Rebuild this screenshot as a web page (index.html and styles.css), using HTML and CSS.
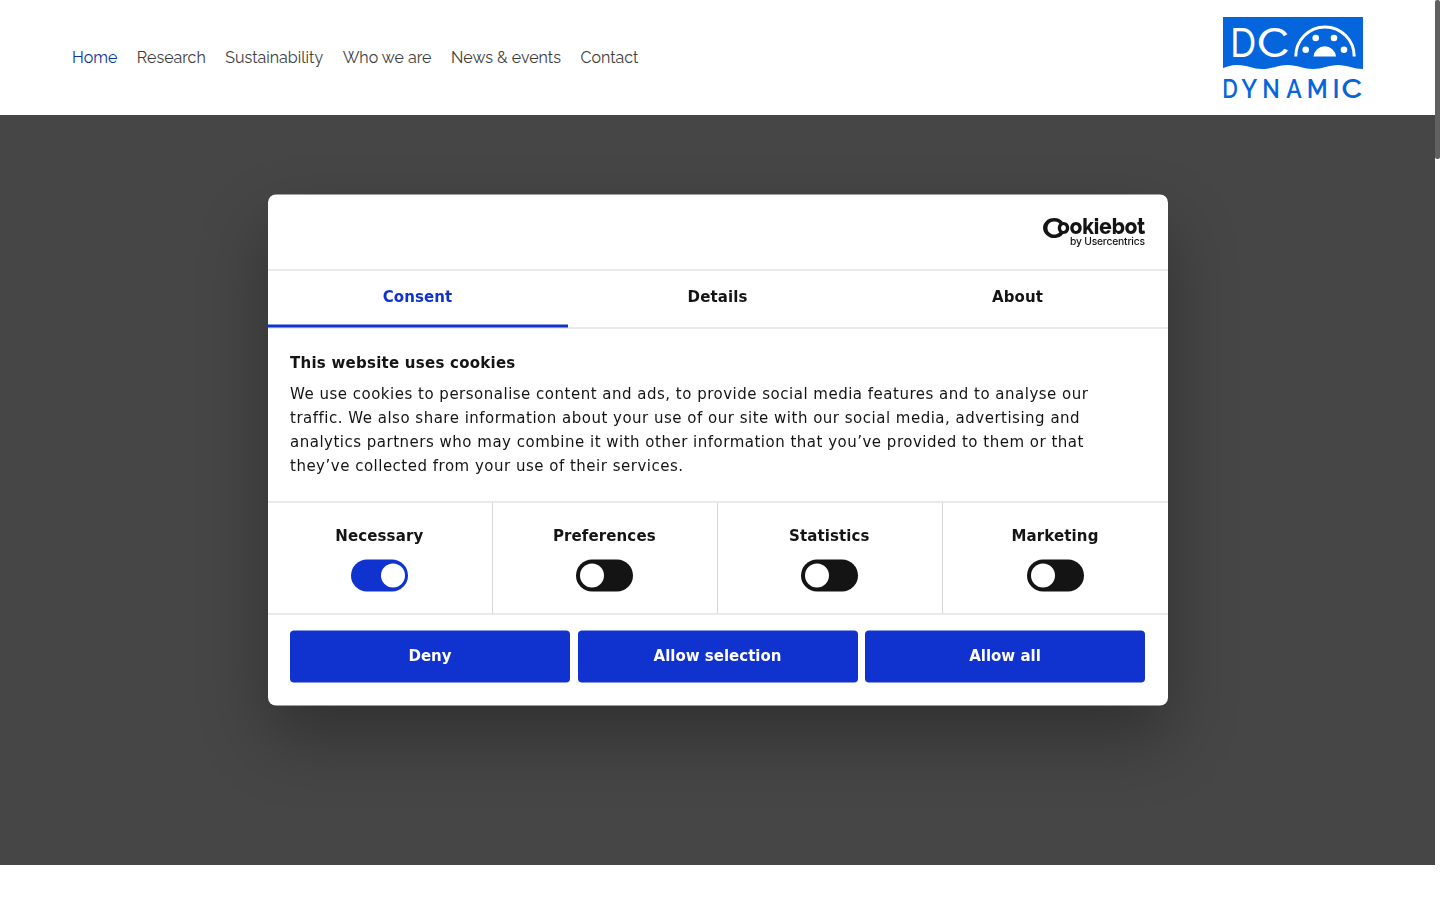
FILE: index.html
```html
<!DOCTYPE html>
<html lang="en">
<head>
    <meta charset="UTF-8">
    <meta name="viewport" content="width=device-width, initial-scale=1.0">
    <title>DC Dynamic</title>
    <link rel="stylesheet" href="styles.css">
</head>
<body>
    <header class="site-header">
        <nav class="main-nav">
            <a class="active" href="#">Home</a>
            <a href="#">Research</a>
            <a href="#">Sustainability</a>
            <a href="#">Who we are</a>
            <a href="#">News &amp; events</a>
            <a href="#">Contact</a>
        </nav>
        <a class="logo" href="#">
            <svg width="140" height="82" viewBox="0 0 140 82">
                <path fill="#0565dc" d="M0 0H140V52C131 52 124 48 115 48S99 52 90 52S74 48 65 48S48 52 39 52S24 48 15 48S5 50 0 51Z"/>
                <text class="logo-dc" y="39.7"><tspan x="7.2" textLength="25.5" lengthAdjust="spacingAndGlyphs">D</tspan><tspan x="34" textLength="32" lengthAdjust="spacingAndGlyphs">C</tspan></text>
                <path fill="none" stroke="#fff" stroke-width="3" d="M72.8 39.5A29.2 29.6 0 0 1 131.2 39.5"/>
                <path fill="#fff" d="M90.5 39.5A11.3 11.3 0 0 1 113 39.5Z"/>
                <g fill="#fff">
                    <circle cx="92.7" cy="21" r="3.3"/>
                    <circle cx="111" cy="21" r="3.3"/>
                    <circle cx="82.7" cy="32.8" r="3.3"/>
                    <circle cx="121" cy="32.8" r="3.3"/>
                </g>
                <text class="logo-name" y="80.7">
                    <tspan x="-0.8" textLength="15.5" lengthAdjust="spacingAndGlyphs">D</tspan><tspan x="18.3" textLength="16" lengthAdjust="spacingAndGlyphs">Y</tspan><tspan x="39.3" textLength="17.5" lengthAdjust="spacingAndGlyphs">N</tspan><tspan x="63.3" textLength="15.5" lengthAdjust="spacingAndGlyphs">A</tspan><tspan x="83.8" textLength="21" lengthAdjust="spacingAndGlyphs">M</tspan><tspan x="109.5">I</tspan><tspan x="118.5" textLength="20.5" lengthAdjust="spacingAndGlyphs">C</tspan>
                </text>
            </svg>
        </a>
    </header>

    <main class="hero"></main>

    <div class="cookie-dialog">
        <div class="cookie-header">
            <svg width="104" height="34" viewBox="0 0 104 34">
                <text class="cb-big" x="-1" y="22.7" textLength="22" lengthAdjust="spacingAndGlyphs">C</text>
                <text class="cb-word" x="14.3" y="18.7" textLength="88" lengthAdjust="spacingAndGlyphs">ookiebot</text>
                <text class="cb-by" x="27" y="29.9" textLength="75">by Usercentrics</text>
            </svg>
        </div>

        <div class="cookie-tabs">
            <a class="tab active" href="#">Consent</a>
            <a class="tab" href="#">Details</a>
            <a class="tab" href="#">About</a>
        </div>

        <div class="cookie-body">
            <h2>This website uses cookies</h2>
            <p>We use cookies to personalise content and ads, to provide social media features and to analyse our traffic. We also share information about your use of our site with our social media, advertising and analytics partners who may combine it with other information that you’ve provided to them or that they’ve collected from your use of their services.</p>
        </div>

        <div class="cookie-options">
            <div class="option">
                <span>Necessary</span>
                <div class="toggle on"></div>
            </div>
            <div class="option">
                <span>Preferences</span>
                <div class="toggle"></div>
            </div>
            <div class="option">
                <span>Statistics</span>
                <div class="toggle"></div>
            </div>
            <div class="option">
                <span>Marketing</span>
                <div class="toggle"></div>
            </div>
        </div>

        <div class="cookie-footer">
            <button>Deny</button>
            <button>Allow selection</button>
            <button>Allow all</button>
        </div>
    </div>

    <div class="scrollbar"></div>
</body>
</html>
```
FILE: styles.css
```css
* {
    margin: 0;
    padding: 0;
    box-sizing: border-box;
}

body {
    background: #fff;
    height: 100vh;
    padding-right: 5px;
    overflow: hidden;
    font-family: "DejaVu Sans", sans-serif;
}

a {
    text-decoration: none;
}

.site-header {
    display: flex;
    justify-content: space-between;
    align-items: center;
    height: 115px;
    padding: 0 72px;
}

.main-nav {
    display: flex;
    gap: 19.55px;
}

.main-nav a {
    font-family: Raleway, Lato, sans-serif;
    font-size: 16px;
    line-height: 24px;
    color: #3c3c3c;
}

.main-nav a.active {
    color: #0b34a0;
}

.logo svg {
    display: block;
    overflow: visible;
}

.logo-dc {
    font-family: Raleway, Lato, sans-serif;
    font-weight: 500;
    font-size: 42px;
    fill: #fff;
}

.logo-name {
    font-family: Raleway, Lato, sans-serif;
    font-weight: 600;
    font-size: 26px;
    fill: #0565dc;
}

.hero {
    height: 750px;
    background: #464646;
}

.cookie-dialog {
    position: fixed;
    top: 50%;
    left: calc(50% - 2.5px);
    transform: translate(-50%, -50%);
    width: 900px;
    height: 511px;
    background: #fff;
    border-radius: 8px;
    box-shadow: 0 32px 68px rgba(0, 0, 0, 0.3);
    color: #141414;
    font-size: 15px;
    overflow: hidden;
}

.cookie-header {
    display: flex;
    justify-content: flex-end;
    align-items: center;
    height: 75px;
    padding: 0 21px;
}

.cookie-header svg {
    overflow: visible;
}

.cb-big,
.cb-word {
    font-family: Raleway, Lato, sans-serif;
    font-weight: 800;
    font-size: 23px;
    fill: #141414;
}

.cb-big {
    font-weight: 700;
    font-size: 28px;
}

.cb-by {
    font-family: Inter, sans-serif;
    font-weight: 500;
    font-size: 10.3px;
    fill: #141414;
}

.cookie-tabs {
    display: flex;
    height: 59px;
    border-top: 1px solid #d6d6d6;
    border-bottom: 1px solid #d6d6d6;
}

.tab {
    flex: 1;
    height: 57px;
    border-bottom: 3px solid transparent;
    text-align: center;
    line-height: 52px;
    letter-spacing: 0.1px;
    font-weight: bold;
    color: #141414;
}

.tab.active {
    color: #1032cf;
    border-color: #1032cf;
}

.cookie-body {
    height: 173px;
    padding: 22px 22.5px 0;
    line-height: 24px;
}

.cookie-body h2 {
    font-size: 15px;
    letter-spacing: 0.25px;
    margin-bottom: 7px;
}

.cookie-body p {
    width: 820px;
    letter-spacing: 0.5px;
}

.cookie-options {
    display: grid;
    grid-template-columns: repeat(4, 1fr);
    height: 113px;
    border-top: 1px solid #d6d6d6;
    border-bottom: 1px solid #d6d6d6;
}

.option {
    display: flex;
    flex-direction: column;
    align-items: center;
    gap: 12px;
    padding: 21px 0.4px 0 0;
    border-right: 1px solid #d6d6d6;
    font-weight: bold;
    line-height: 24px;
}

.option span {
    letter-spacing: 0.12px;
}

.option:last-child {
    padding-right: 0;
    border-right: none;
}

.toggle {
    width: 57px;
    height: 32px;
    padding: 4px;
    border-radius: 16px;
    background: #141414;
}

.toggle::before {
    content: "";
    display: block;
    width: 24px;
    height: 24px;
    border-radius: 50%;
    background: #fff;
}

.toggle.on {
    background: #1032cf;
}

.toggle.on::before {
    margin-left: 26px;
}

.cookie-footer {
    display: flex;
    gap: 7.5px;
    padding: 16px 22.5px 0;
}

.cookie-footer button {
    flex: 1;
    height: 52px;
    padding-bottom: 2px;
    border: none;
    border-radius: 4px;
    background: #1032cf;
    color: #fff;
    font-family: inherit;
    font-size: 15px;
    font-weight: bold;
}

.scrollbar {
    position: fixed;
    top: 0;
    right: 0;
    width: 5px;
    height: 159px;
    background: #606060;
    border-radius: 2px;
}
```
